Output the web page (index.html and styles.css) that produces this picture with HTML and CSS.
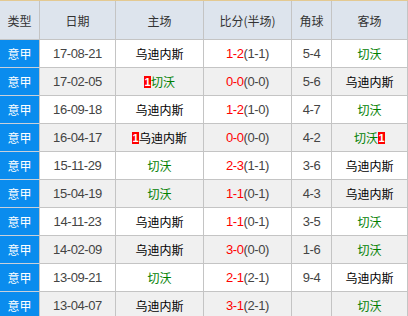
FILE: index.html
```html
<!DOCTYPE html>
<html>
<head>
<meta charset="utf-8">
<link rel="stylesheet" href="styles.css">
</head>
<body>
<div class="tbl">
  <div class="row head">
    <div class="c">类型</div><div class="c">日期</div><div class="c">主场</div><div class="c">比分(半场)</div><div class="c">角球</div><div class="c">客场</div>
  </div>
  <div class="row">
    <div class="c lg">意甲</div><div class="c num">17-08-21</div><div class="c team">乌迪内斯</div><div class="c num"><span class="sc">1-2</span>(1-1)</div><div class="c num">5-4</div><div class="c team g">切沃</div>
  </div>
  <div class="row alt">
    <div class="c lg">意甲</div><div class="c num">17-02-05</div><div class="c team g"><span class="rc">1</span>切沃</div><div class="c num"><span class="sc">0-0</span>(0-0)</div><div class="c num">5-6</div><div class="c team">乌迪内斯</div>
  </div>
  <div class="row">
    <div class="c lg">意甲</div><div class="c num">16-09-18</div><div class="c team">乌迪内斯</div><div class="c num"><span class="sc">1-2</span>(1-0)</div><div class="c num">4-7</div><div class="c team g">切沃</div>
  </div>
  <div class="row alt">
    <div class="c lg">意甲</div><div class="c num">16-04-17</div><div class="c team"><span class="rc">1</span>乌迪内斯</div><div class="c num"><span class="sc">0-0</span>(0-0)</div><div class="c num">4-2</div><div class="c team g">切沃<span class="rc">1</span></div>
  </div>
  <div class="row">
    <div class="c lg">意甲</div><div class="c num">15-11-29</div><div class="c team g">切沃</div><div class="c num"><span class="sc">2-3</span>(1-1)</div><div class="c num">3-6</div><div class="c team">乌迪内斯</div>
  </div>
  <div class="row alt">
    <div class="c lg">意甲</div><div class="c num">15-04-19</div><div class="c team g">切沃</div><div class="c num"><span class="sc">1-1</span>(0-1)</div><div class="c num">4-3</div><div class="c team">乌迪内斯</div>
  </div>
  <div class="row">
    <div class="c lg">意甲</div><div class="c num">14-11-23</div><div class="c team">乌迪内斯</div><div class="c num"><span class="sc">1-1</span>(0-1)</div><div class="c num">3-5</div><div class="c team g">切沃</div>
  </div>
  <div class="row alt">
    <div class="c lg">意甲</div><div class="c num">14-02-09</div><div class="c team">乌迪内斯</div><div class="c num"><span class="sc">3-0</span>(0-0)</div><div class="c num">1-6</div><div class="c team g">切沃</div>
  </div>
  <div class="row">
    <div class="c lg">意甲</div><div class="c num">13-09-21</div><div class="c team g">切沃</div><div class="c num"><span class="sc">2-1</span>(2-1)</div><div class="c num">9-4</div><div class="c team">乌迪内斯</div>
  </div>
  <div class="row alt">
    <div class="c lg">意甲</div><div class="c num">13-04-07</div><div class="c team">乌迪内斯</div><div class="c num"><span class="sc">3-1</span>(2-1)</div><div class="c num"></div><div class="c team g">切沃</div>
  </div>
</div>
</body>
</html>
```
FILE: styles.css
```css
html, body {
  margin: 0;
  padding: 0;
  background: #ffffff;
}
.tbl {
  width: 408px;
  border-top: 1px solid #e3c992;
  font-family: "Liberation Sans", "Noto Sans CJK SC", sans-serif;
}
.row {
  display: grid;
  grid-template-columns: 40px 76px 88px 88px 40px 76px;
  height: 28px;
  background: #ffffff;
}
.row.alt {
  background: #f0f0f0;
}
.row.head {
  height: 39px;
  background: #dde4ed;
}
.c {
  box-sizing: border-box;
  border-right: 1px solid #c4c4c4;
  border-bottom: 1px solid #c4c4c4;
  display: flex;
  align-items: center;
  justify-content: center;
  white-space: nowrap;
  font-size: 12px;
  color: #000;
}
.head .c {
  font-family: "Noto Sans CJK SC", sans-serif;
  font-size: 12px;
  color: #333;
}
.lg {
  background: #0a8cee;
  color: #fff;
  font-family: "Noto Sans CJK SC", sans-serif;
  border-bottom-color: #c8d0da;
}
.num {
  font-family: "Liberation Sans", sans-serif;
  font-size: 13px;
  color: #444;
  letter-spacing: -0.4px;
}
.team {
  font-family: "Noto Sans CJK SC", sans-serif;
  font-size: 12px;
  color: #000;
}
.team.g {
  color: #008000;
}
.sc {
  color: #ff0000;
}
.rc {
  display: inline-block;
  width: 7px;
  height: 12px;
  line-height: 12px;
  background: #ff0000;
  color: #fff;
  font-family: "Liberation Sans", sans-serif;
  font-weight: bold;
  font-size: 11px;
  text-align: center;
}
```
